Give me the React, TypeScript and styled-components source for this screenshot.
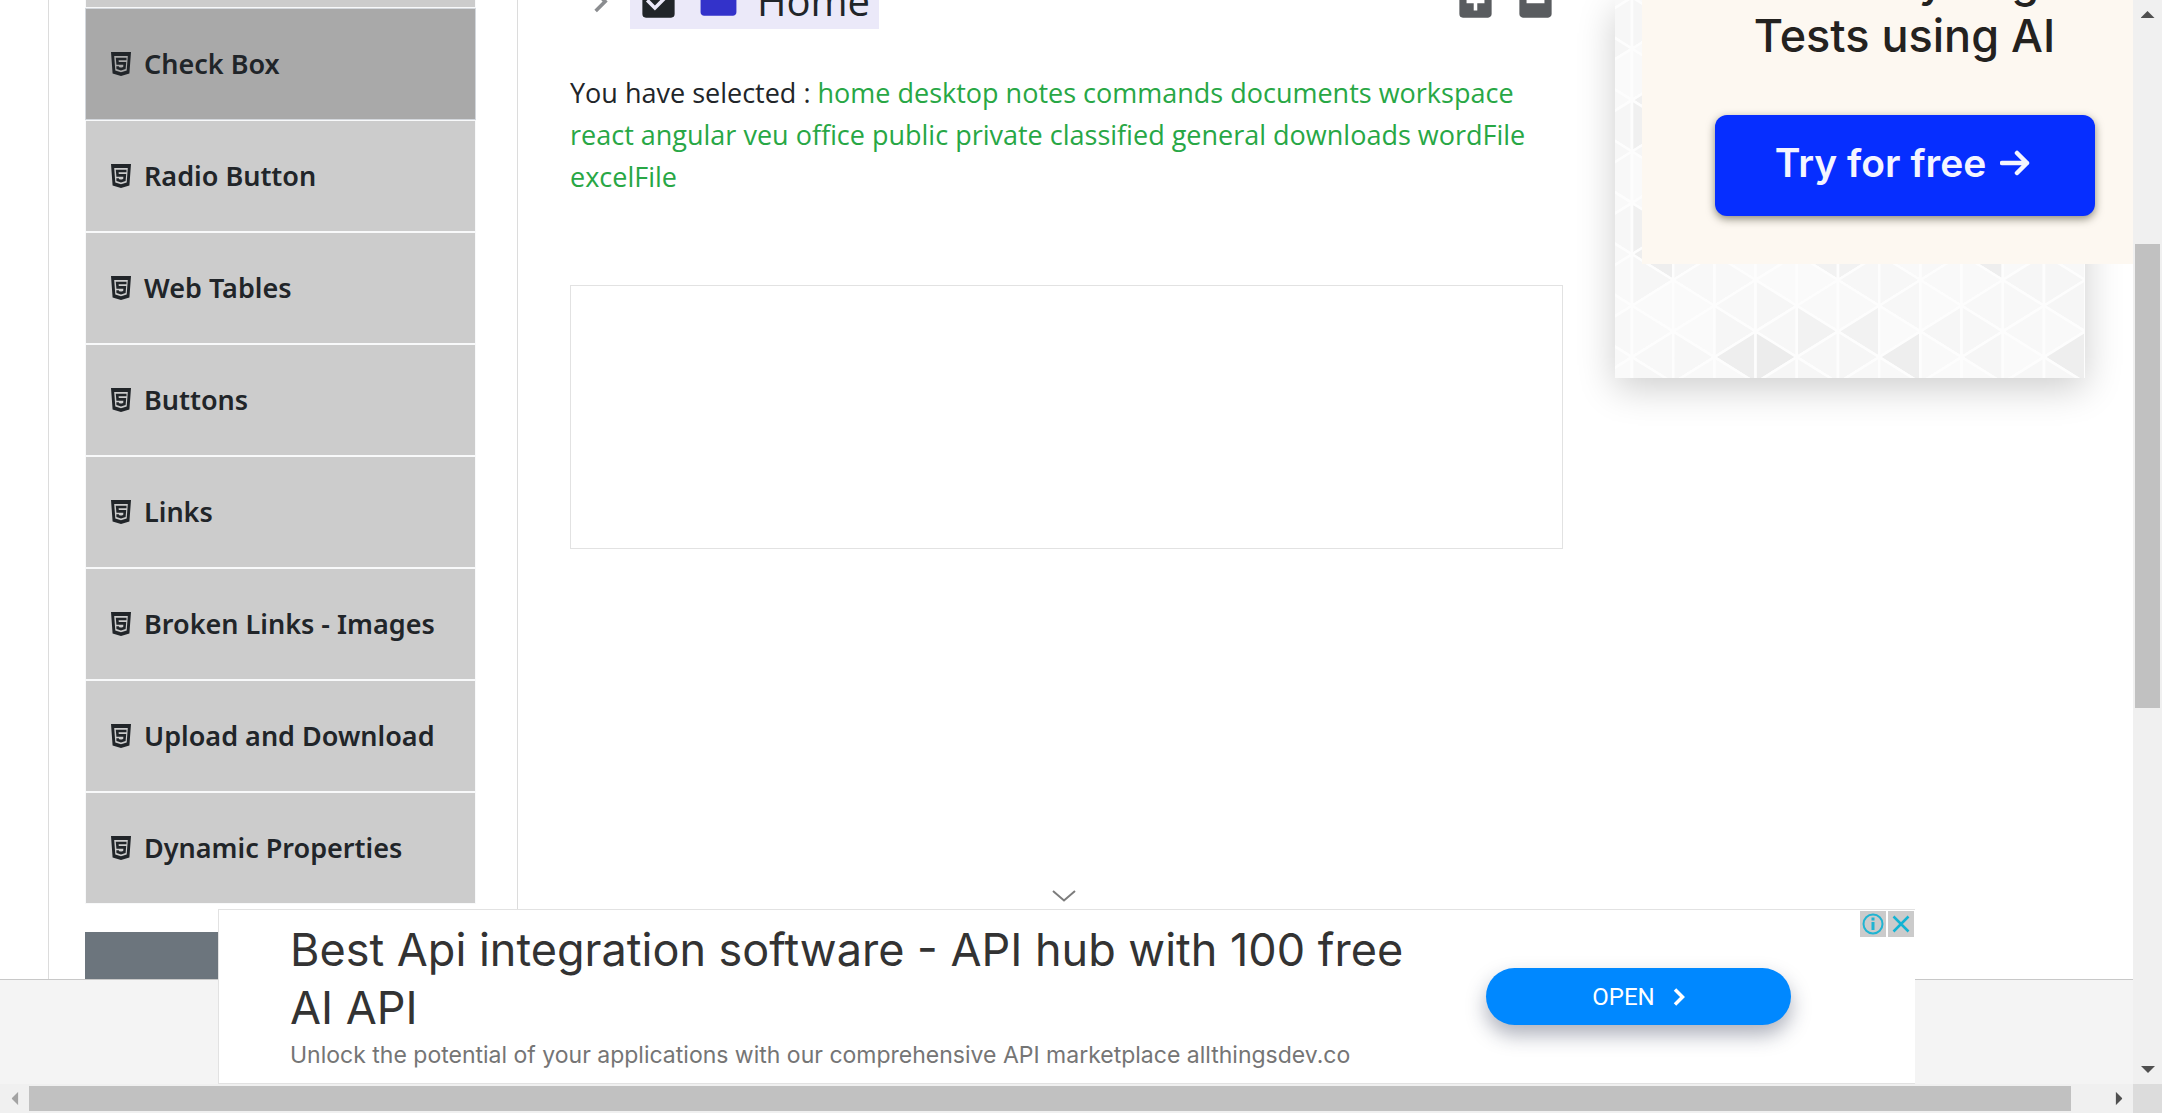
import React from "react";
import styled, { createGlobalStyle, css } from "styled-components";
import {
  MdAddBox,
  MdCheckBox,
  MdChevronRight,
  MdFolder,
  MdIndeterminateCheckBox,
} from "react-icons/md";

const uiFont = `"Open Sans", "Noto Sans", sans-serif`;
const adFont = `Inter, "Liberation Sans", sans-serif`;

const GlobalStyle = createGlobalStyle`
  *, *::before, *::after { box-sizing: border-box; }
  body { margin: 0; background: #fff; color: #212529; font-family: ${uiFont}; }
  ul, h2, p { margin: 0; padding: 0; }
  ul { list-style: none; }
  button { font: inherit; color: inherit; border: 0; padding: 0; background: none; cursor: pointer; }
`;

const Window = styled.div`
  display: grid;
  grid-template: minmax(0, 1fr) 29px / minmax(0, 1fr) 29px;
  height: 100vh;
`;

const Viewport = styled.div`
  position: relative;
  overflow: hidden;
  background: #f4f4f4;
`;

const Page = styled.div`
  display: flex;
  padding: 0 48px;
  background: #fff;
  border-bottom: 1px solid #c8c8c8;
`;

/* ---------- left menu ---------- */

const Sidebar = styled.nav`
  flex: none;
  width: 470px;
  padding: 0 41px 0 36px;
  border: solid #dcdcdc;
  border-width: 0 1px;
`;

const Menu = styled.ul`
  margin-top: -104px;
`;

const MenuLink = styled.a<{ $active?: boolean }>`
  display: flex;
  align-items: center;
  gap: 13px;
  height: 112px;
  padding: 0 25px;
  border: 1px solid ${(p) => (p.$active ? "#d3d7dc" : "#f8f9fa")};
  background: ${(p) => (p.$active ? "#a9a9a9" : "#ccc")};
  color: #212529;
  font: 600 27px/40px "Noto Sans", sans-serif;
  text-decoration: none;
  white-space: nowrap;
`;

const GroupBar = styled.div`
  height: 47px;
  margin-top: 28px;
  background: #6c757d;
`;

const HtmlMark = () => (
  <svg width="20" height="24" viewBox="0 0 20 24" aria-hidden="true">
    <path
      fillRule="evenodd"
      fill="#212529"
      d="M0 0h20l-1.600 21.500L10 24l-8.400-2.500zM3.200 4l1.100 14.600L10 20.300l5.700-1.700L16.800 4z"
    />
    <path
      d="M15.500 7H6.200l.4 4.400h7.200l-.4 4.700-3.400 1-3.300-1-.1-1.800"
      fill="none"
      stroke="#212529"
      strokeWidth="2.600"
    />
  </svg>
);

/* ---------- main column ---------- */

const Main = styled.main`
  flex: 1;
  min-width: 0;
  padding: 0 52px;
`;

const TreeRow = styled.div`
  display: flex;
  align-items: center;
  height: 56px;
  margin-top: -27px;
  padding: 0 6px 0 9px;
`;

const IconButton = styled.button<{ $tone: string }>`
  display: flex;
  color: ${(p) => p.$tone};
  font-size: 43px;
`;

const Node = styled.label`
  position: relative;
  display: flex;
  align-items: center;
  gap: 17px;
  height: 56px;
  margin-left: 8px;
  padding: 0 9px 0 7px;
  background: #ebe9f9;
  font-size: 40px;
  line-height: 56px;

  svg { width: 43px; height: 43px; }
  .folder { color: #3332ca; }
`;

const NodeInput = styled.input`
  position: absolute;
  width: 43px;
  height: 43px;
  margin: 0;
  opacity: 0;
`;

const Tools = styled.div`
  display: flex;
  gap: 17px;
  margin-left: auto;
`;

const Result = styled.p`
  margin-top: 43px;
  font-size: 27px;
  line-height: 42px;
`;

const Chosen = styled.span`
  color: #28a745;
`;

const Frame = styled.div`
  height: 264px;
  margin-top: 87px;
  border: 1px solid #e2e2e2;
`;

/* ---------- side advert ---------- */

const Aside = styled.aside`
  position: relative;
  flex: none;
  align-self: flex-start;
  width: 470px;
  padding: 0 0 114px 27px;
  background: #fbfbfb;
  box-shadow: 0 10px 36px rgba(0, 0, 0, 0.2);
`;

const Pattern = styled.svg`
  position: absolute;
  left: 0;
  bottom: 0;
  width: 100%;
  height: 378px;
`;

const Creative = styled.div`
  position: relative;
  display: flex;
  flex-direction: column;
  align-items: center;
  width: 525px;
  margin-top: -47px;
  padding-bottom: 48px;
  background: #fdf8f1;
  color: #24221f;
  font-family: ${adFont};
`;

const CreativeTitle = styled.h2`
  font-size: 45px;
  font-weight: 500;
  line-height: 55px;
  text-align: center;
`;

const TryButton = styled.button`
  display: flex;
  align-items: center;
  justify-content: center;
  gap: 14px;
  width: 380px;
  height: 101px;
  margin-top: 52px;
  border-radius: 12px;
  background: #062eff;
  box-shadow: 0 3px 8px rgba(30, 30, 10, 0.5);
  color: #f4f5ff;
  font-size: 39px;
  font-weight: 600;
  padding: 0 4px 6px 0;
`;

/* ---------- bottom advert ---------- */

const Banner = styled.section`
  position: absolute;
  left: 218px;
  right: 218px;
  bottom: 0;
  display: flex;
  align-items: center;
  justify-content: space-between;
  min-height: 175px;
  padding: 0 124px 0 71px;
  border: solid #e2e2e2;
  border-width: 1px 0 1px 1px;
  background: #fff;
  font-family: ${adFont};
`;

const BannerCopy = styled.div`
  max-width: 1150px;
`;

const BannerTitle = styled.h2`
  color: #333;
  font-size: 45px;
  font-weight: 400;
  line-height: 58px;
`;

const BannerText = styled.p`
  color: #757575;
  font-size: 23px;
  line-height: 36px;
`;

const OpenLink = styled.a`
  display: flex;
  flex: none;
  align-items: center;
  justify-content: center;
  gap: 18px;
  width: 305px;
  height: 57px;
  border-radius: 29px;
  background: #0088ff;
  box-shadow: 0 10px 20px rgba(30, 40, 70, 0.36);
  color: #fff;
  font: 400 24px/28px Roboto, sans-serif;
  text-decoration: none;
`;

const Collapse = styled.button`
  position: absolute;
  left: 50%;
  bottom: 100%;
  display: flex;
  margin-left: -15px;
  padding-bottom: 8px;
`;

const Choices = styled.div`
  position: absolute;
  top: 1px;
  right: 1px;
  display: flex;
  gap: 2px;
`;

const Choice = styled.button`
  display: flex;
  background: #cbcbcb;
`;

/* ---------- scroll bars ---------- */

const bar = css`
  display: flex;
  align-items: stretch;
  background: #f0f0f0;
`;

const VBar = styled.div`
  ${bar}
  flex-direction: column;
  padding: 0 2px;
`;

const HBar = styled.div`
  ${bar}
  padding: 2px 0;
`;

const Arrow = styled.span<{ $turn?: number; $tone?: string }>`
  display: grid;
  flex: 0 0 29px;
  place-items: center;

  &::before {
    content: "";
    width: 14px;
    height: 7px;
    background: ${(p) => p.$tone ?? "#505050"};
    clip-path: polygon(50% 0, 100% 100%, 0 100%);
    transform: rotate(${(p) => p.$turn ?? 0}deg);
  }
`;

const Gap = styled.span<{ $grow: number }>`
  flex: ${(p) => p.$grow} 1 0;
`;

const Thumb = styled(Gap)`
  background: #c1c1c1;
`;

const Corner = styled.div`
  background: #dcdcdc;
`;

const menuItems = [
  "Text Box",
  "Check Box",
  "Radio Button",
  "Web Tables",
  "Buttons",
  "Links",
  "Broken Links - Images",
  "Upload and Download",
  "Dynamic Properties",
];

const chosen =
  "home desktop notes commands documents workspace react angular veu office public private classified general downloads wordFile excelFile";

/* Triangle lattice: columns are `step` apart, rows `half` apart. */
const step = 41.2;
const half = 25.7;
const shades: Record<string, string> = {
  "2,13": "#eeeeee",
  "3,13": "#ececec",
  "6,13": "#eeeeee",
  "10,13": "#eeeeee",
  "4,12": "#f2f2f2",
  "5,12": "#f2f2f2",
  "0,9": "#eeeeee",
  "8,9": "#eeeeee",
  "4,9": "#f2f2f2",
  "5,9": "#f2f2f2",
  "0,8": "#f0f0f0",
  "0,4": "#f0f0f0",
  "0,3": "#f0f0f0",
};
const tints = ["#f6f6f6", "#f9f9f9", "#f7f7f7", "#fafafa", "#f8f8f8"];

const Lattice = () => {
  const cells: React.ReactNode[] = [];
  for (let col = -1; col < 12; col++) {
    for (let row = -1; row < 16; row++) {
      const x = 17 + col * step;
      const y = 23 + row * half;
      const pointsRight = (col + row) % 2 === 0;
      const [apex, base] = pointsRight ? [x + step, x] : [x, x + step];
      const tint = tints[Math.abs(col * 7 + row * 3 + ((col * row) % 4)) % tints.length];
      cells.push(
        <polygon
          key={`${col},${row}`}
          points={`${apex},${y} ${base},${y - half} ${base},${y + half}`}
          fill={shades[`${col},${row}`] ?? tint}
        />
      );
    }
  }
  return (
    <Pattern viewBox="0 0 470 378" preserveAspectRatio="xMinYMax slice" aria-hidden="true">
      <g stroke="#fdfdfd" strokeWidth="2.500">
        {cells}
      </g>
    </Pattern>
  );
};

export default function App() {
  return (
    <>
      <GlobalStyle />
      <Window>
        <Viewport>
          <Page>
            <Sidebar aria-label="Elements">
              <Menu>
                {menuItems.map((item) => (
                  <li key={item}>
                    <MenuLink href="#" $active={item === "Check Box"}>
                      <HtmlMark />
                      {item}
                    </MenuLink>
                  </li>
                ))}
              </Menu>
              <GroupBar />
            </Sidebar>

            <Main>
              <TreeRow>
                <IconButton $tone="#8b8d90" aria-label="Toggle">
                  <MdChevronRight />
                </IconButton>
                <Node>
                  <NodeInput type="checkbox" defaultChecked />
                  <MdCheckBox />
                  <MdFolder className="folder" />
                  Home
                </Node>
                <Tools>
                  <IconButton $tone="#595c5f" aria-label="Expand all">
                    <MdAddBox />
                  </IconButton>
                  <IconButton $tone="#595c5f" aria-label="Collapse all">
                    <MdIndeterminateCheckBox />
                  </IconButton>
                </Tools>
              </TreeRow>
              <Result>
                You have selected : <Chosen>{chosen}</Chosen>
              </Result>
              <Frame />
            </Main>

            <Aside>
              <Lattice />
              <Creative>
                <CreativeTitle>
                  Write Playwright
                  <br />
                  Tests using AI
                </CreativeTitle>
                <TryButton>
                  Try for free
                  <svg width="30" height="26" viewBox="0 0 30 26" aria-hidden="true">
                    <path
                      d="M2 13h25M17 3l10 10-10 10"
                      fill="none"
                      stroke="currentColor"
                      strokeWidth="4.500"
                      strokeLinecap="round"
                      strokeLinejoin="round"
                    />
                  </svg>
                </TryButton>
              </Creative>
            </Aside>
          </Page>

          <Banner>
            <Collapse aria-label="Hide advert">
              <svg width="24" height="12" viewBox="0 0 24 12" aria-hidden="true">
                <path d="M1 1l11 9.500L23 1" fill="none" stroke="#7c7c7c" strokeWidth="2" />
              </svg>
            </Collapse>
            <BannerCopy>
              <BannerTitle>Best Api integration software - API hub with 100 free AI API</BannerTitle>
              <BannerText>
                Unlock the potential of your applications with our comprehensive API marketplace
                allthingsdev.co
              </BannerText>
            </BannerCopy>
            <OpenLink href="#">
              OPEN
              <svg width="12" height="18" viewBox="0 0 12 18" aria-hidden="true">
                <path d="M2 1.500L9.500 9 2 16.500" fill="none" stroke="#fff" strokeWidth="3.500" />
              </svg>
            </OpenLink>
            <Choices>
              <Choice aria-label="About this advert">
                <svg width="26" height="26" viewBox="0 0 26 26" aria-hidden="true">
                  <circle cx="13" cy="13" r="9.500" fill="none" stroke="#1fb4d2" strokeWidth="2" />
                  <path d="M13 11v8M13 6.500v3" stroke="#1fb4d2" strokeWidth="3" />
                </svg>
              </Choice>
              <Choice aria-label="Close advert">
                <svg width="26" height="26" viewBox="0 0 26 26" aria-hidden="true">
                  <path d="M5.500 5.500l15 15M20.500 5.500l-15 15" stroke="#12b3d3" strokeWidth="2.500" />
                </svg>
              </Choice>
            </Choices>
          </Banner>
        </Viewport>

        <VBar aria-hidden="true">
          <Arrow />
          <Gap $grow={215} />
          <Thumb $grow={464} />
          <Gap $grow={347} />
          <Arrow $turn={180} />
        </VBar>
        <HBar aria-hidden="true">
          <Arrow $turn={-90} $tone="#a3a3a3" />
          <Thumb $grow={2042} />
          <Gap $grow={33} />
          <Arrow $turn={90} />
        </HBar>
        <Corner />
      </Window>
    </>
  );
}
